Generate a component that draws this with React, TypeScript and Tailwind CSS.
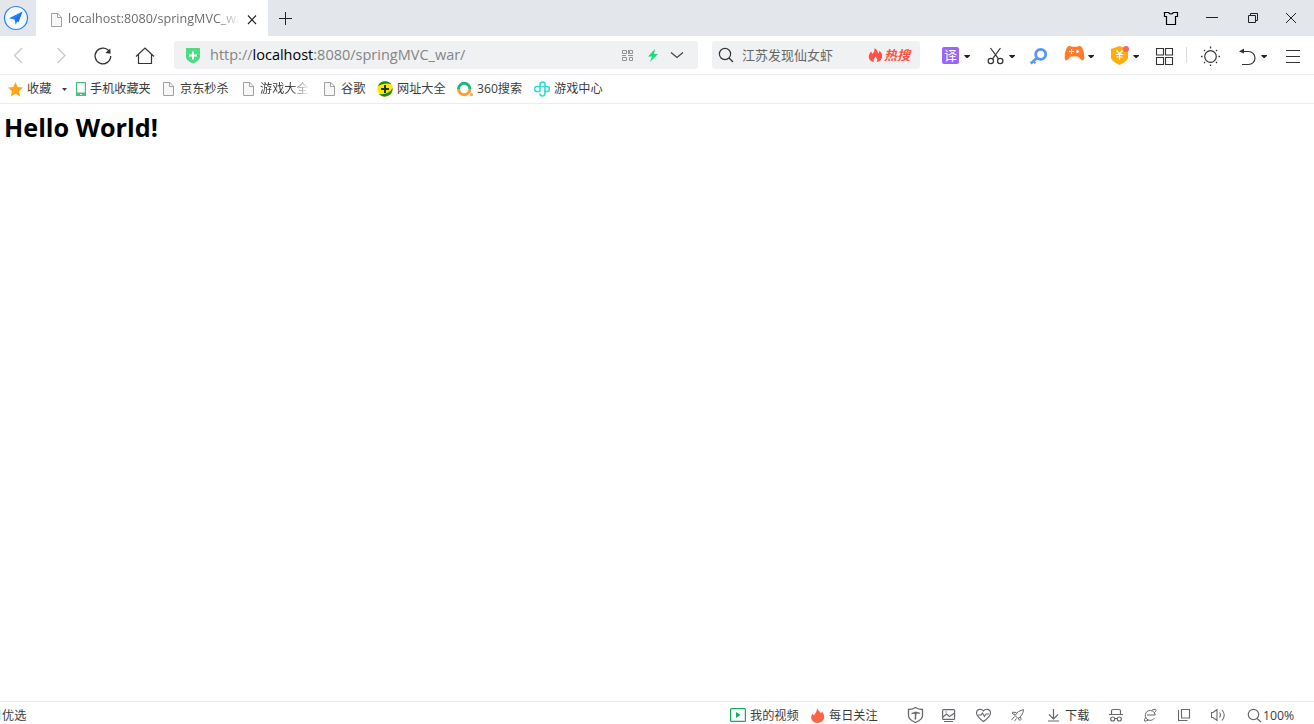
import type { ReactNode } from "react";

type IconProps = { box: string; className: string; children: ReactNode };

/* Line icon; each toolbar shares one coordinate grid. */
function Icon({ box, className, children }: IconProps) {
  return (
    <svg viewBox={box} fill="none" stroke="currentColor" className={`block shrink-0 ${className}`}>
      {children}
    </svg>
  );
}

function Caret({ className }: { className: string }) {
  return (
    <Icon box="0 44 6 22" className={`h-[22px] w-1.5 text-[#222] ${className}`}>
      <path d="M.3 55h5.700v.800l-2.300 2.200h-1.100L.3 55.800z" fill="currentColor" stroke="none" />
    </Icon>
  );
}

function PageIcon({ className }: { className: string }) {
  return (
    <Icon box="0 0 11 14" className={`h-3.5 w-[11px] text-[#a0a0a0] ${className}`}>
      <path d="M.5 .5h6.3l3.7 3.7v9.3H.5zM6.5 .5v4h4" fill="#f7f7f7" />
    </Icon>
  );
}

function Label({ className, children }: { className: string; children: ReactNode }) {
  return <span className={`block shrink-0 overflow-visible whitespace-nowrap ${className}`}>{children}</span>;
}

function TitleBar() {
  return (
    <header className="flex h-9 shrink-0 items-center bg-[#e3e6eb] text-[#222]">
      <Icon box="3 5 26 26" className="ml-[3px] h-[26px] w-[26px]">
        <circle cx="16" cy="18" r="11.5" fill="#f5faff" stroke="#2482f5" strokeWidth="1.2" />
        <path d="M22.5 11.5 9 18.2l5.6 1.2 1 5.3z" fill="#2482f5" stroke="none" />
        <path d="m22.5 11.5-7.9 7.9 4 2.8z" fill="#1b70ec" stroke="none" />
      </Icon>
      <div className="ml-[7px] flex h-full w-[232px] items-center bg-white">
        <PageIcon className="mt-[3px] ml-[15px]" />
        <Label className="mt-0.5 ml-[6px] w-[172px] overflow-hidden bg-gradient-to-r from-[#666] from-86% to-white bg-clip-text text-[12.600px] leading-5 text-transparent">
          localhost:8080/springMVC_war/
        </Label>
        <Icon box="246 8 12 20" className="mt-px ml-[6px] h-5 w-3">
          <path d="m248 14.500 8 8.500m0-8.500-8 8.500" strokeWidth="1.1" />
        </Icon>
      </div>
      <Icon box="278 8 15 20" className="ml-[10px] h-5 w-[15px]">
        <path d="M279 18.5h13M285.5 12v13" />
      </Icon>
      <Icon box="1163 8 16 20" className="ml-[870px] h-5 w-4 text-black">
        <path d="M1164.5 12.5h4q2.5 3 5 0h4v4h-2v8h-9v-8h-2z" strokeWidth="1.2" />
      </Icon>
      <Icon box="1206 8 12 20" className="ml-[27px] h-5 w-3">
        <path d="M1206 17.5h12" />
      </Icon>
      <Icon box="1247 8 12 20" className="ml-[29px] h-5 w-3">
        <path d="M1248.5 15.5h7v7h-7zM1250.5 15.5v-2h7v7h-2" />
      </Icon>
      <Icon box="1285 8 12 20" className="ml-[26px] h-5 w-3">
        <path d="m1286 13 10 10m0-10-10 10" />
      </Icon>
    </header>
  );
}

function AddressBox() {
  return (
    <div className="ml-[19px] flex h-7 w-[524px] shrink-0 items-center rounded-[3px] bg-[#eff1f3]">
      <Icon box="186 44 14 22" className="ml-3 h-[22px] w-3.5">
        <path d="M186 48h14v9.500q-1 3.5-7 6-6-2.500-7-6z" fill="#4fdb84" stroke="none" />
        <path d="M189 55.500h8M193 51.500v8" stroke="#fff" strokeWidth="2" />
      </Icon>
      <Label className="ml-[10px] w-[390px] text-[14.5px] leading-5 text-[#858585]">
        http://<span className="text-black">localhost</span>:8080/springMVC_war/
      </Label>
      <Icon box="622 44 12 22" className="ml-[22px] h-[22px] w-3 text-[#929496]">
        <path d="M622.5 50.500h4v3h-4zM629.500 50.500h3v3h-3zM622.500 57.500h4v3h-4zM629.500 57.500h3v3h-3zM622 55.500h4m2 0h5M628.500 50v4" />
      </Icon>
      <Icon box="648 44 10 22" className="ml-[14px] h-[22px] w-2.5">
        <path d="m655 49-7 7.500h4l-2 5.500 8-8h-4z" fill="#20d779" stroke="none" />
      </Icon>
      <Icon box="670 44 14 22" className="ml-3 h-[22px] w-3.5 text-[#444]">
        <path d="m671 52.500 6 5 6-5" strokeWidth="1.300" />
      </Icon>
    </div>
  );
}

function SearchBox() {
  return (
    <div className="ml-3.5 flex h-7 w-[208px] shrink-0 items-center rounded-[3px] bg-[#eff1f3]">
      <Icon box="718 44 16 22" className="ml-1.5 h-[22px] w-4 text-[#333]">
        <circle cx="725" cy="54" r="5.600" strokeWidth="1.200" />
        <path d="m729 58 4 4" strokeWidth="1.300" />
      </Icon>
      <Label className="ml-2 w-[92px] text-[13px] leading-5 text-[#666]">江苏发现仙女虾</Label>
      <Icon box="868 44 14 22" className="ml-[34px] h-[22px] w-3.5">
        <path
          d="M874.500 48c2.500 1.500 3.500 3.500 3.500 5.500 1-.700 1.300-1.500 1.300-3 2.500 2 3.500 5 2.500 7.500s-3 4-5.300 4c1.500-2 .5-3.500-1.300-5.500-.200 2-2.500 3-1.200 5.500-4-.500-6-3.500-5-7 .5-1.500 1.500-2.500 2-3.500 .7.500 1 1.500 1 2.500 2-1.500 2.700-3.500 2.500-6z"
          fill="#ff5146"
          stroke="none"
        />
      </Icon>
      <Label className="ml-0.5 w-7 text-[13px] leading-5 font-bold text-[#ff5146] italic">热搜</Label>
    </div>
  );
}

function NavBar() {
  return (
    <div className="flex h-[39px] shrink-0 items-center border-b border-[#ececee] text-[#333]">
      <Icon box="13 44 10 22" className="ml-[13px] h-[22px] w-2.5 text-[#c6c6c6]">
        <path d="m22 48-7.500 7.500L22 63" strokeWidth="1.200" />
      </Icon>
      <Icon box="56 44 10 22" className="ml-[33px] h-[22px] w-2.5 text-[#c6c6c6]">
        <path d="m57.500 48 7.500 7.500-7.500 7.500" strokeWidth="1.200" />
      </Icon>
      <Icon box="93 44 20 22" className="ml-[27px] h-[22px] w-5">
        <path d="M109.600 52a7.800 7.800 0 1 0 1.100 4" strokeWidth="1.300" />
        <path d="m110.300 48.500.300 5.300-5.300-.800z" fill="currentColor" stroke="none" />
      </Icon>
      <Icon box="135 44 20 22" className="ml-[22px] h-[22px] w-5">
        <path d="m136 56.500 9-8.500 9 8.500M138.500 54.500v9h13v-9" strokeWidth="1.200" />
      </Icon>
      <AddressBox />
      <SearchBox />
      <div className="ml-[22px] flex h-[17px] w-[17px] shrink-0 items-center justify-center rounded-[2px] bg-[#9766fa] text-[13px] leading-4 text-white">
        译
      </div>
      <Caret className="ml-[5px]" />
      <Icon box="987 44 17 22" className="ml-[17px] h-[22px] w-[17px]">
        <circle cx="990.800" cy="61" r="2.700" strokeWidth="1.200" />
        <circle cx="1000.200" cy="61" r="2.700" strokeWidth="1.200" />
        <path d="m990.500 48 8 10.800m2-10.800-8 10.800" strokeWidth="1.200" />
      </Icon>
      <Caret className="ml-[5px]" />
      <Icon box="1029 44 19 22" className="ml-3.5 h-[22px] w-[19px] text-[#5794fb]">
        <circle cx="1040.700" cy="54.300" r="5" strokeWidth="2.800" />
        <path d="m1037 58-6.300 5.500" strokeWidth="2.600" />
        <path d="m1033.500 61 2 2.300" strokeWidth="1.800" />
      </Icon>
      <Icon box="1064 44 21 22" className="ml-4 h-[22px] w-[21px]">
        <path
          d="M1069.500 46q1.500 0 2.500.800h5q1-.800 2.500-.800c3.500 0 4.800 7.500 4.800 11.500 0 3-2 3.500-3.800 1.500-1.500-1.500-2-2.500-3-2.500h-6c-1 0-1.500 1-3 2.500-1.800 2-3.800 1.500-3.800-1.500 0-4 1.300-11.500 4.800-11.500z"
          fill="#ff7a2c"
          stroke="none"
        />
        <path d="M1069 51.500h5M1071.500 49v5" stroke="#fff" strokeWidth="1.200" />
        <circle cx="1077.500" cy="51.500" r="1.500" fill="#fff" stroke="none" />
      </Icon>
      <Caret className="ml-[3px]" />
      <Icon box="1110 44 20 22" className="ml-4 h-[22px] w-5">
        <path d="m1119.500 46 8.500 3v9q-1 3.500-8.500 7-7.500-3.500-8.500-7v-9z" fill="#ffad0a" stroke="none" />
        <path d="m1116.500 50.500 3 3.500 3-3.500M1115.800 54.500h7.400M1116.500 57h6M1119.500 54v6" stroke="#fff" strokeWidth="1.200" />
        <circle cx="1126" cy="49" r="3" fill="#ff6168" stroke="none" />
      </Icon>
      <Caret className="ml-[3px]" />
      <Icon box="1155 44 19 22" className="ml-4 h-[22px] w-[19px]">
        <path d="M1156.500 48.500h7v6.500h-7zM1165.500 48.500h7v6.500h-7zM1156.500 57.500h7v7h-7zM1165.500 57.500h7v7h-7z" strokeWidth="1.100" />
      </Icon>
      <div className="ml-3 h-4 w-px bg-[#dcdcdc]" />
      <Icon box="1200 44 21 22" className="ml-[13px] h-[22px] w-[21px]">
        <circle cx="1210.500" cy="56.500" r="5.800" strokeWidth="1.200" />
        <path
          d="M1210.500 46.500v2m0 16v1.500M1201 56.500h1.500m16 0h1.500M1204 50l1 1m11 11 1 1M1204 63l1-1m11-11 1-1"
          strokeWidth="1.300"
        />
      </Icon>
      <Icon box="1238 44 18 22" className="ml-[17px] h-[22px] w-[18px]">
        <path d="M1241 51.500h7.500a6.500 6.500 0 0 1 0 13H1242" strokeWidth="1.200" />
        <path d="m1239 51.500 5-3v5z" fill="currentColor" stroke="none" />
      </Icon>
      <Caret className="ml-[5px]" />
      <Icon box="1286 44 14 22" className="ml-[19px] h-[22px] w-3.5">
        <path d="M1286 50.500h14m-14 6h14m-14 6h14" strokeWidth="1.200" />
      </Icon>
    </div>
  );
}

function BookmarkBar() {
  return (
    <nav className="flex h-[29px] shrink-0 items-center border-b border-[#ececee] text-[12.150px] leading-5 text-[#3c3c3c]">
      <Icon box="8 81 15 16" className="ml-2 h-4 w-[15px]">
        <path d="m15.500 82 2.200 5 5.300.500-4 3.700 1.200 5.300-4.700-2.800-4.700 2.800 1.200-5.300-4-3.700 5.300-.500z" fill="#ffa516" stroke="none" />
      </Icon>
      <Label className="ml-1 w-[25px]">收藏</Label>
      <Icon box="62 81 5 16" className="ml-[10px] h-4 w-[5px]">
        <path d="M62 88h5l-2.500 3z" fill="currentColor" stroke="none" />
      </Icon>
      <Icon box="76 81 10 16" className="ml-[9px] h-4 w-2.5 text-[#45c07d]">
        <path d="M76.600 82.600h8.800v12.800h-8.800z" fill="#fff" strokeWidth="1.200" />
        <path d="M76 92.500h10v3.500H76z" fill="currentColor" stroke="none" />
        <path d="M80 94.500h2" stroke="#fff" />
      </Icon>
      <Label className="ml-1 w-[62px]">手机收藏夹</Label>
      <PageIcon className="ml-[11px]" />
      <Label className="ml-1.5 w-[50px]">京东秒杀</Label>
      <PageIcon className="ml-[13px]" />
      <Label className="ml-1.5 w-[50px] bg-gradient-to-r from-[#3c3c3c] from-60% to-white bg-clip-text text-transparent">游戏大全</Label>
      <PageIcon className="ml-3.5" />
      <Label className="ml-1.5 w-[25px]">谷歌</Label>
      <Icon box="377 81 16 16" className="ml-[11px] h-4 w-4">
        <circle cx="385" cy="89" r="7.800" fill="#ffe50b" stroke="none" />
        <path d="M378 86a7.800 7.800 0 0 1 13.500-1.500Q386 82 378 86zM379 94a7.800 7.800 0 0 0 13.500-6Q389 95 379 94z" fill="#118b24" stroke="none" />
        <path d="M381 89h8m-4-4v8" stroke="#173d08" strokeWidth="2" />
      </Icon>
      <Label className="ml-1 w-[50px]">网址大全</Label>
      <Icon box="457 81 16 16" className="ml-[10px] h-4 w-4">
        <path d="M458.500 89a5.700 5.700 0 0 1 11.400 0" stroke="#19b981" strokeWidth="3" />
        <path d="M458.500 89a5.700 5.700 0 0 0 11.400 0" stroke="#ff9c34" strokeWidth="3" />
        <circle cx="471.500" cy="94.500" r="1.500" fill="#ff9c34" stroke="none" />
      </Icon>
      <Label className="ml-1 w-[46px]">360搜索</Label>
      <Icon box="534 81 16 16" className="ml-[11px] h-4 w-4">
        <path d="M540 91.500v-7q0-2.500 2.500-2.500t2.500 2.500v7M537 86.500h10q2.500 0 2.500 2.500t-2.500 2.500h-3M540 91.500h-3q-2.500 0-2.500-2.500t2.500-2.500M540 93.500q0 2.500 2.500 2.500t2.500-2.500v-3" stroke="#30ddd5" strokeWidth="1.600" />
      </Icon>
      <Label className="ml-1 w-[50px]">游戏中心</Label>
    </nav>
  );
}

function StatusBar() {
  return (
    <footer className="flex h-[23px] shrink-0 items-center border-t border-[#e8e8e8] text-[12.150px] leading-5 text-[#3c3c3c]">
      <div className="mt-[3px] h-2.5 w-px bg-[#bdf5f8]" />
      <Label className="mt-[5px] ml-px w-[25px]">优选</Label>
      <Icon box="730 703 16 20" className="ml-[703px] h-5 w-4 text-[#12ad58]">
        <rect x="730.600" y="708.600" width="14.800" height="12.800" rx="1" strokeWidth="1.200" />
        <path d="M736 712v6l4.500-3z" fill="currentColor" stroke="none" />
      </Icon>
      <Label className="mt-[5px] ml-1 w-[50px]">我的视频</Label>
      <Icon box="810 703 15 20" className="ml-[10px] h-5 w-[15px]">
        <path
          d="M817 708c1 3 3.500 3.500 4 5.500l1-2c2.500 3 3 6 1 9-1 1.500-3.500 2.500-5.500 2.500s-5-1-6-3.500c-1-3 .5-5 1-6l1 2c2-2 3.500-4 3.500-7.500z"
          fill="#fb6548"
          stroke="none"
        />
      </Icon>
      <Label className="mt-[5px] ml-1 w-[50px]">每日关注</Label>
      <div className="flex items-center text-[#66686c]">
        <Icon box="907 703 17 20" className="ml-7 h-5 w-[17px]">
          <path d="M915.500 707.500q3 2 7 2v6q0 4-7 7-7-3-7-7v-6q4 0 7-2z" strokeWidth="1.300" />
          <path d="M911 714.300q.5-2 3-2 1.500-1.500 3.500-.300 2.500 0 3 2-2.500-.800-4-.200l-.500 5.700h-1.500l.5-5.500q-2-.800-4 .300z" fill="currentColor" stroke="none" />
        </Icon>
        <Icon box="941 703 15 20" className="ml-[17px] h-5 w-[15px]">
          <rect x="942.600" y="709.600" width="12" height="9.800" rx="1" strokeWidth="1.200" />
          <path d="m943 717 3.500-3 3 2.500 5-3.500M944 721.500h9" strokeWidth="1.100" />
          <circle cx="946" cy="712" r=".7" fill="currentColor" stroke="none" />
        </Icon>
        <Icon box="975 703 17 20" className="ml-[19px] h-5 w-[17px]">
          <path d="M983.500 721.500c-4-3-7-5-7-8.500 0-4 5-5 7-2 2-3 7-2 7 2 0 3.500-3 5.500-7 8.500z" strokeWidth="1.100" />
          <path d="M978 715h3l1.500-2 2 3.500 1.500-2.500h3" strokeWidth="1.100" />
        </Icon>
        <Icon box="1010 703 15 20" className="ml-[18px] h-5 w-[15px]">
          <path d="M1015 715.500q2.500-5 8.500-6-.500 6-5.500 9zM1016.500 712.500l-4-.300q-.800 1 .500 1.800l2.500.500M1020.500 716.500l.500 3q-.800 1.500-1.800.500l-.700-2M1014.500 716.500l-3 3.500M1016.500 718.500l-2 2.500" />
        </Icon>
        <Icon box="1047 703 13 20" className="ml-[22px] h-5 w-[13px]">
          <path d="M1053.500 709v10m-4.500-4.500 4.500 4.500 4.500-4.500M1048 721h11" strokeWidth="1.200" />
        </Icon>
        <Label className="mt-[5px] ml-[5px] w-[25px] text-[#3c3c3c]">下载</Label>
        <Icon box="1109 703 14 20" className="ml-[19px] h-5 w-3.5">
          <path d="M1111.500 714v-3q0-1.500 1.500-1.500h6q1.500 0 1.500 1.500v3M1109 714.500h14M1114.500 718.500h3" strokeWidth="1.200" />
          <circle cx="1112.700" cy="719" r="2" strokeWidth="1.200" />
          <circle cx="1119.300" cy="719" r="2" strokeWidth="1.200" />
        </Icon>
        <Icon box="1143 703 14 20" className="ml-5 h-5 w-3.5">
          <path d="M1154.500 718a5 5 0 1 1 .7-3H1147M1152 710q4.500-1.500 4 .500-.500 1.500-2 2.500M1146 717q-2.500 3.500-1.500 4t4-1" />
        </Icon>
        <Icon box="1178 703 13 20" className="ml-[21px] h-5 w-[13px]">
          <path d="M1181.500 709.500h8v8.500h-8zM1178.500 710v10.500h9" strokeWidth="1.100" />
        </Icon>
        <Icon box="1210 703 16 20" className="ml-[19px] h-5 w-4">
          <path d="M1211.500 712.500h1.500l4-3v11l-4-3h-1.500zM1219.500 712.500q2 2.500 0 5M1222 710q4.500 5 0 10.500" strokeWidth="1.100" />
        </Icon>
        <Icon box="1247 703 15 20" className="ml-[21px] h-5 w-[15px]">
          <circle cx="1253.500" cy="714.500" r="5.200" strokeWidth="1.200" />
          <path d="m1257 718.500 4 3.500" strokeWidth="1.200" />
        </Icon>
        <Label className="mt-[5px] ml-px w-8 text-[12.300px] text-[#3c3c3c]">100%</Label>
      </div>
    </footer>
  );
}

export default function App() {
  return (
    <div className="flex h-screen flex-col overflow-hidden bg-white font-['Open_Sans','Noto_Sans_CJK_SC',sans-serif]">
      <TitleBar />
      <NavBar />
      <BookmarkBar />
      <main className="min-h-0 flex-1 pt-1 pl-1">
        <h1 className="text-[25.200px] leading-[38px] font-bold text-black">Hello World!</h1>
      </main>
      <StatusBar />
    </div>
  );
}
